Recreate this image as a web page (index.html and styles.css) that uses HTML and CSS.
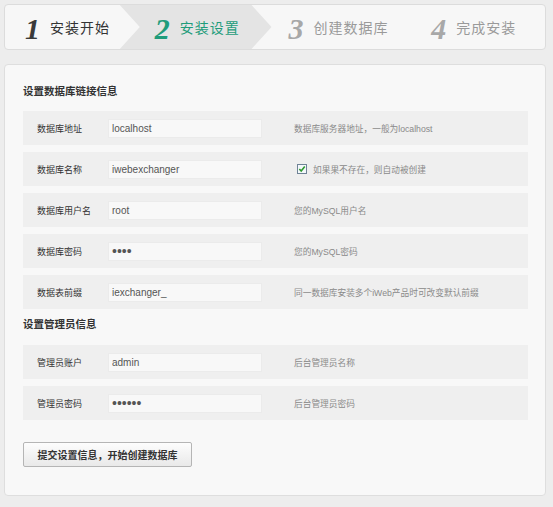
FILE: index.html
```html
<!DOCTYPE html>
<html lang="zh-CN">
<head>
    <meta charset="UTF-8">
    <meta name="viewport" content="width=device-width, initial-scale=1.0">
    <title>iWebExchanger 安装设置</title>
    <link rel="stylesheet" href="styles.css">
</head>
<body>
    <div class="wrap">
        <ul class="steps">
            <li class="step done"><span class="num">1</span>安装开始</li>
            <li class="step current"><span class="num">2</span>安装设置</li>
            <li class="step"><span class="num">3</span>创建数据库</li>
            <li class="step"><span class="num">4</span>完成安装</li>
        </ul>

        <form class="panel" action="#" method="post">
            <h3>设置数据库链接信息</h3>
            <div class="row">
                <label>数据库地址</label>
                <input class="field" type="text" value="localhost">
                <span class="tip">数据库服务器地址，一般为localhost</span>
            </div>
            <div class="row">
                <label>数据库名称</label>
                <input class="field" type="text" value="iwebexchanger">
                <span class="tip">
                    <span class="check">
                        <svg width="8" height="8" viewBox="0 0 9 9"><path d="M1.5 4.5 L3.6 6.8 L7.6 1.8" fill="none" stroke="#2f9a2f" stroke-width="1.8"/></svg>
                    </span>
                    如果果不存在，则自动被创建
                </span>
            </div>
            <div class="row">
                <label>数据库用户名</label>
                <input class="field" type="text" value="root">
                <span class="tip">您的MySQL用户名</span>
            </div>
            <div class="row">
                <label>数据库密码</label>
                <input class="field pass" type="password" value="1234">
                <span class="tip">您的MySQL密码</span>
            </div>
            <div class="row">
                <label>数据表前缀</label>
                <input class="field" type="text" value="iexchanger_">
                <span class="tip">同一数据库安装多个iWeb产品时可改变默认前缀</span>
            </div>

            <h3 class="second">设置管理员信息</h3>
            <div class="row">
                <label>管理员账户</label>
                <input class="field" type="text" value="admin">
                <span class="tip">后台管理员名称</span>
            </div>
            <div class="row">
                <label>管理员密码</label>
                <input class="field pass" type="password" value="123456">
                <span class="tip">后台管理员密码</span>
            </div>

            <button class="submit" type="button">提交设置信息，开始创建数据库</button>
        </form>
    </div>
</body>
</html>
```

FILE: styles.css
```css
body{
    margin: 0;
    padding: 4px 0 0 4px;
    background-color: #ededed;
    font-family: Arial, "Liberation Sans", "Noto Sans CJK SC", sans-serif;
    font-size: 11px;
    color: #333;
}

.wrap{
    width: 542px;
}

/* step bar */
.steps{
    display: flex;
    margin: 0;
    padding: 0;
    list-style: none;
    height: 44px;
    background-color: #f7f7f7;
    border: 1px solid #dcdcdc;
    border-radius: 4px;
    overflow: hidden;
}

.step{
    display: flex;
    align-items: center;
    box-sizing: border-box;
    font-size: 14px;
    color: #9a9a9a;
    letter-spacing: 1px;
}

.step .num{
    font-family: "Liberation Serif", "Times New Roman", serif;
    font-style: italic;
    font-weight: bold;
    font-size: 30px;
    margin: 3px 10px 0 0;
    color: #a8a8a8;
    letter-spacing: 0;
}

.step:nth-child(1){ width: 115px; padding-left: 20px; }
.step:nth-child(2){ width: 152px; padding-left: 35px; }
.step:nth-child(3){ width: 140px; padding-left: 17px; }
.step:nth-child(4){ width: 134px; padding-left: 20px; }

.step.done{
    color: #333;
}

.step.done .num{
    color: #3a3a3a;
}

.step.current{
    color: #1f9c7b;
    background-color: #e4e4e4;
    clip-path: polygon(0 0, calc(100% - 20px) 0, 100% 50%, calc(100% - 20px) 100%, 0 100%, 20px 50%);
}

.step.current .num{
    color: #1f9c7b;
}

/* form panel */
.panel{
    margin-top: 14px;
    height: 432px;
    box-sizing: border-box;
    padding: 19px 17px 0 18px;
    background-color: #f8f8f8;
    border: 1px solid #dedede;
    border-radius: 4px;
}

h3{
    margin: 0 0 13px;
    font-size: 10.5px;
    line-height: 14px;
    font-weight: bold;
    color: #333;
}

h3.second{
    margin-top: 8px;
    margin-bottom: 14px;
}

.row{
    display: flex;
    align-items: center;
    height: 34px;
    margin-bottom: 7px;
    padding-left: 14px;
    background-color: #efefef;
}

.row label{
    width: 71px;
    flex: none;
    font-size: 9px;
    color: #333;
}

.field{
    width: 154px;
    height: 19px;
    box-sizing: border-box;
    margin: 0;
    padding: 0 3px;
    border: 1px solid #ebebeb;
    background-color: #f8f8f8;
    font-family: Arial, "Liberation Sans", sans-serif;
    font-size: 10px;
    color: #555;
    outline: none;
}

.field.pass{
    font-size: 14px;
    color: #555;
}

.tip{
    display: flex;
    align-items: center;
    margin-left: 32px;
    font-size: 8.7px;
    color: #8a8a8a;
}

.check{
    display: inline-flex;
    align-items: center;
    justify-content: center;
    width: 8px;
    height: 8px;
    margin: 0 6px 0 3px;
    border: 1px solid #6f8396;
    background-color: #f4f8fb;
}

.submit{
    display: block;
    margin-top: 22px;
    width: 169px;
    height: 25px;
    padding: 0;
    border: 1px solid #b5b5b5;
    border-radius: 2px;
    background: linear-gradient(#fdfdfd, #e9e9e9);
    font-family: "Noto Sans CJK SC", sans-serif;
    font-size: 10px;
    font-weight: bold;
    color: #333;
}
```
